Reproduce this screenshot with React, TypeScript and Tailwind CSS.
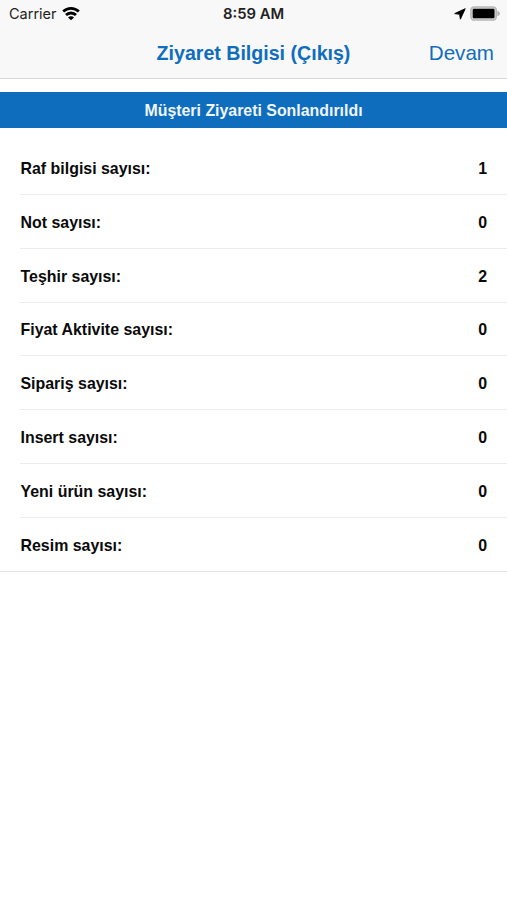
type VisitStat = {
  label: string;
  value: number;
};

const stats: VisitStat[] = [
  { label: "Raf bilgisi sayısı:", value: 1 },
  { label: "Not sayısı:", value: 0 },
  { label: "Teşhir sayısı:", value: 2 },
  { label: "Fiyat Aktivite sayısı:", value: 0 },
  { label: "Sipariş sayısı:", value: 0 },
  { label: "Insert sayısı:", value: 0 },
  { label: "Yeni ürün sayısı:", value: 0 },
  { label: "Resim sayısı:", value: 0 },
];

function WifiIcon() {
  return (
    <svg className="h-[14px] w-[18px]" viewBox="0 0 18 14" fill="none" stroke="#000" strokeWidth="2.8">
      <path d="M1.2 4.6C5.6 .4 12.4 .4 16.8 4.6" />
      <path d="M4 8.1C6.8 5.3 11.2 5.3 14 8.1" />
      <path d="M9 13.3L6 10.4C7.6 8.8 10.4 8.8 12 10.4Z" fill="#000" stroke="none" />
    </svg>
  );
}

function LocationIcon() {
  return (
    <svg className="h-[12px] w-[12px]" viewBox="0 0 12 12">
      <path d="M11.2 .7L.7 5.6L5.6 6.3L6.4 11.2Z" fill="#000" stroke="#000" strokeWidth=".9" strokeLinejoin="round" />
    </svg>
  );
}

function BatteryIcon() {
  return (
    <svg className="h-[15px] w-[31px]" viewBox="0 0 31 15">
      <rect x=".9" y=".9" width="25.4" height="13.2" rx="3.4" fill="#d5d5d5" stroke="#b8b8b8" strokeWidth="1.5" />
      <rect x="2.7" y="2.7" width="21.8" height="9.6" rx="1.2" fill="#000" />
      <path d="M27.4 4.8C30.8 6 30.8 9 27.4 10.2Z" fill="#b5b5b5" />
    </svg>
  );
}

function StatusBar() {
  return (
    <div className="grid h-[27px] grid-cols-3 items-center pl-[9px] pr-[6px] font-['Inter',sans-serif] text-[15px] text-[#222]">
      <div className="flex items-center gap-[5px]">
        <span className="text-[14.5px]">Carrier</span>
        <WifiIcon />
      </div>
      <span className="-ml-[3px] pt-px text-center text-[14.8px] font-semibold">8:59 AM</span>
      <div className="flex items-center justify-end gap-[4px]">
        <LocationIcon />
        <BatteryIcon />
      </div>
    </div>
  );
}

function NavBar() {
  return (
    <div className="grid h-[51px] grid-cols-[1fr_auto_1fr] items-center px-[13px] text-[#0f6dbe]">
      <span />
      <h1 className="pt-[2px] text-[19.6px] font-bold">Ziyaret Bilgisi (Çıkış)</h1>
      <button className="justify-self-end pt-px text-[20.6px]">Devam</button>
    </div>
  );
}

export default function App() {
  return (
    <div className="h-[900px] w-full overflow-hidden bg-white font-['Liberation_Sans',Arial,sans-serif]">
      <header className="border-b border-[#d8d8d8] bg-[#f8f8f8]">
        <StatusBar />
        <NavBar />
      </header>

      <main className="pt-[12.5px]">
        <h2 className="flex h-[36.5px] items-center justify-center bg-[#0f6dbe] pt-[2px] text-[15.9px] font-bold text-[#eef5fb]">
          Müşteri Ziyareti Sonlandırıldı
        </h2>

        <ul className="mt-[13.4px] border-b border-[#e4e4e4] text-[15.93px] font-bold text-[#0a0a0a]">
          {stats.map((stat) => (
            <li key={stat.label} className="group pl-[20px]">
              <div className="flex h-[53.75px] items-center justify-between border-b border-[#ececec] pl-[0.5px] pr-[20px] pt-[2.6px] group-last:border-b-0">
                <span>{stat.label}</span>
                <span>{stat.value}</span>
              </div>
            </li>
          ))}
        </ul>
      </main>
    </div>
  );
}
